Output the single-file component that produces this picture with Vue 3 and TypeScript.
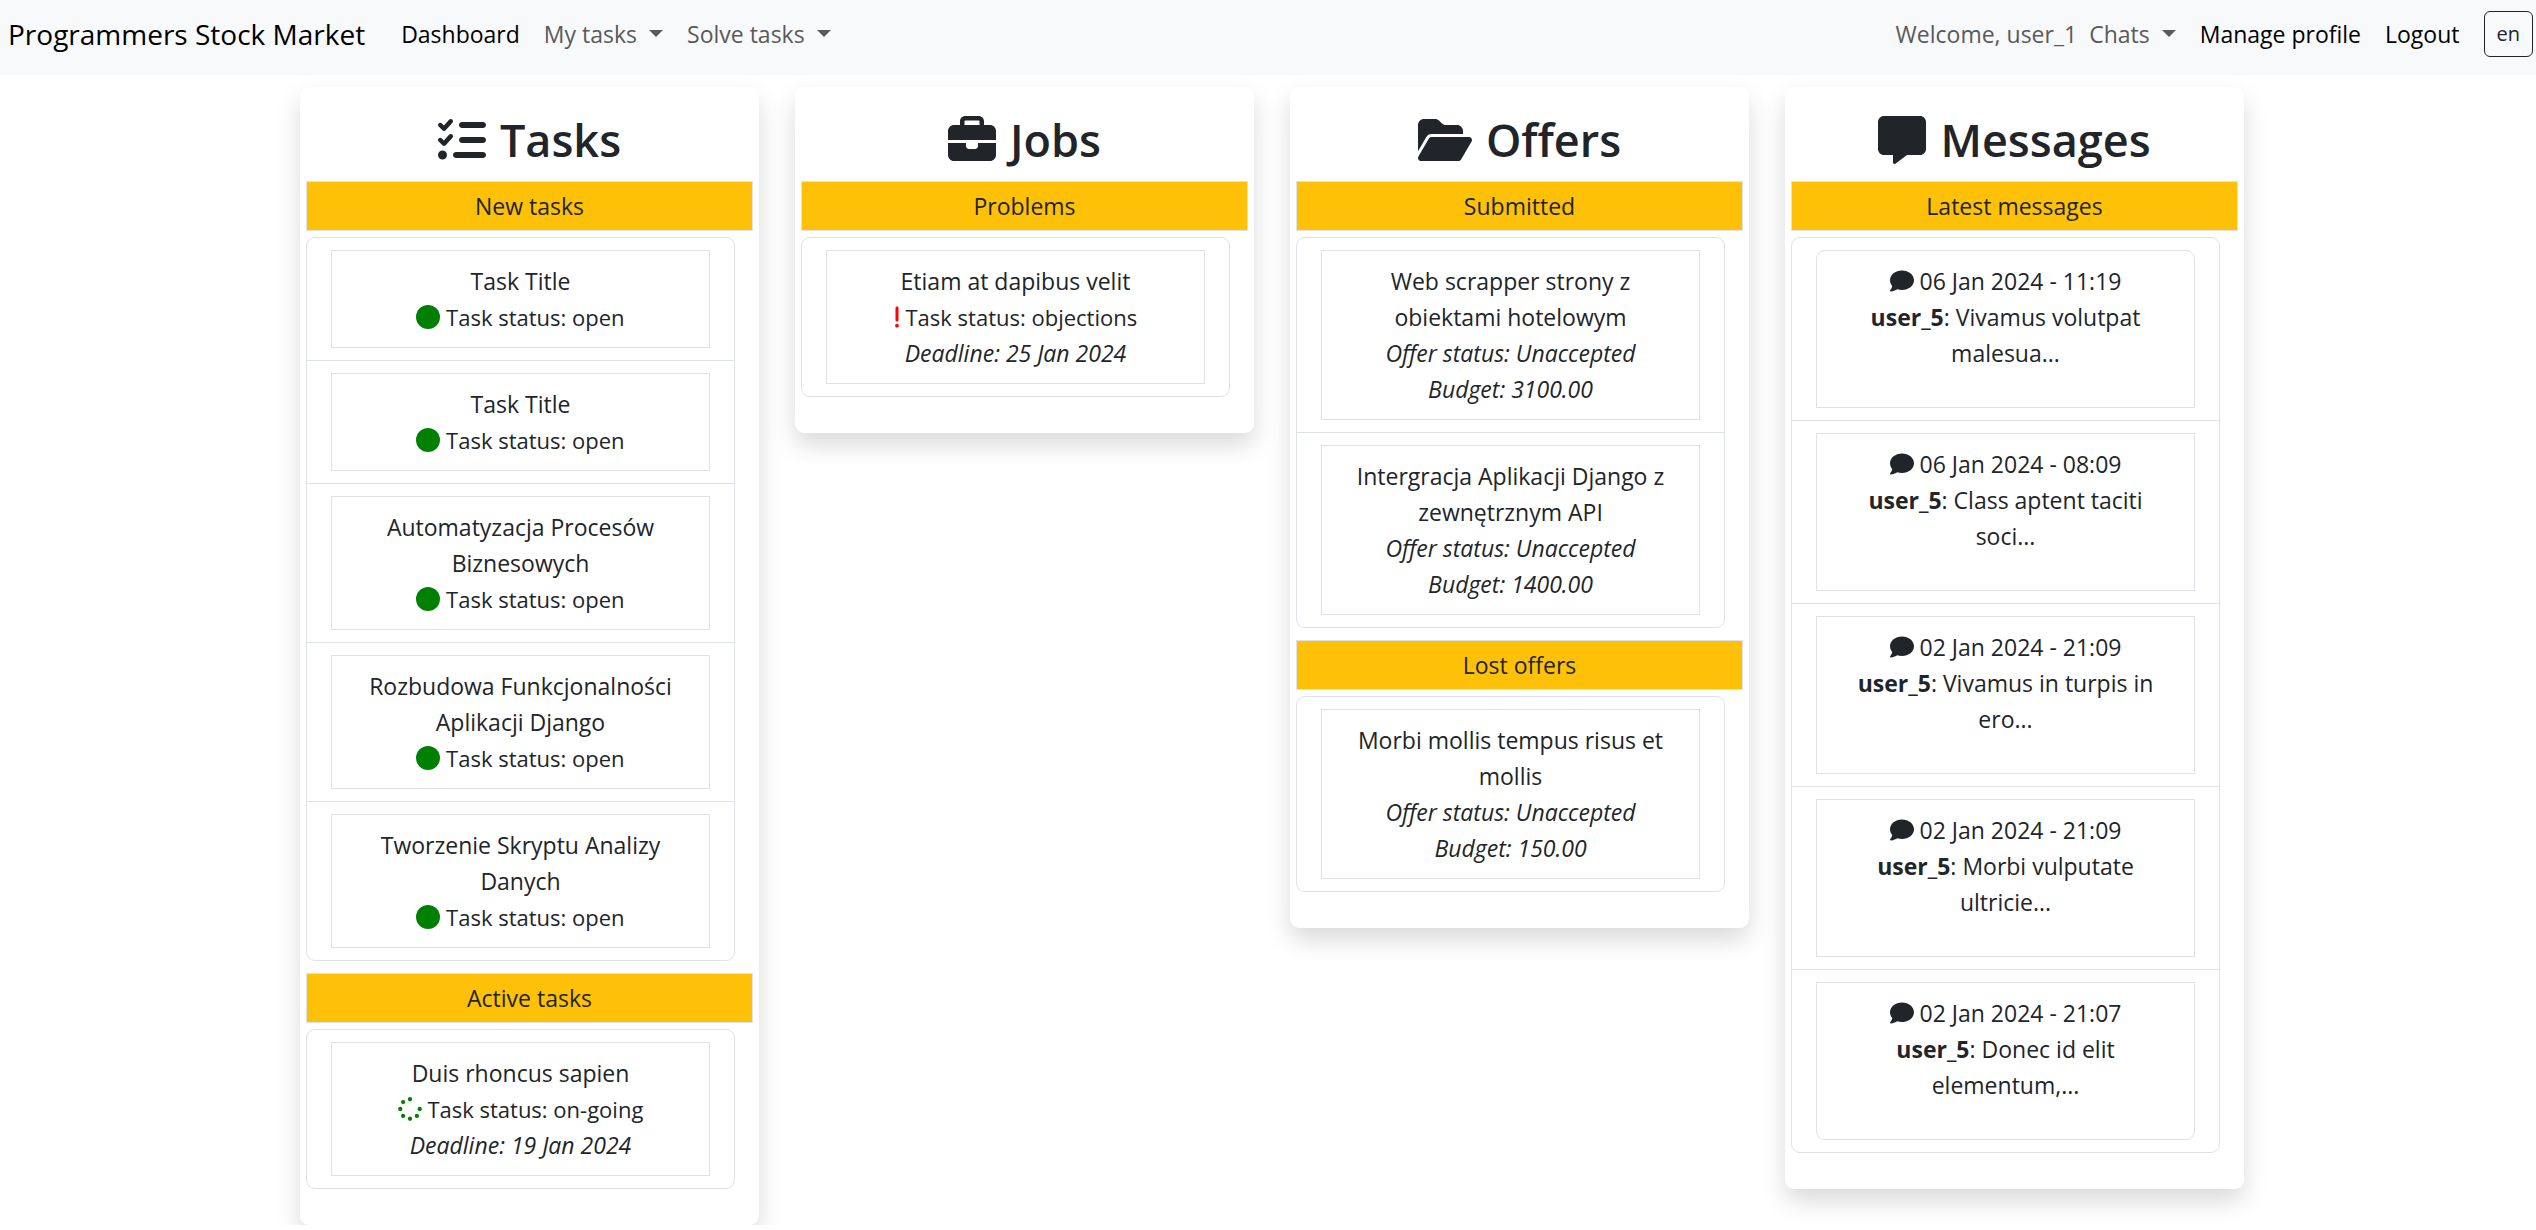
<script setup lang="ts">
interface Icon {
  width: number
  path: string
}

interface Entry {
  title?: string
  icon?: Icon
  iconClass?: string
  status?: string
  details?: string[]
  date?: string
  author?: string
  text?: string
}

interface Section {
  name: string
  entries: Entry[]
}

interface Board {
  title: string
  icon: Icon
  rounded?: boolean
  sections: Section[]
}

const listCheck: Icon = {
  width: 512,
  path: 'M152.1 38.2c9.9 8.9 10.7 24 1.8 33.9l-72 80c-4.4 4.9-10.6 7.8-17.2 7.9s-12.9-2.4-17.6-7L7 113C-2.3 103.6-2.3 88.4 7 79s24.6-9.4 33.9 0l22.1 22.1 55.1-61.2c8.9-9.9 24-10.7 33.9-1.8zm0 160c9.9 8.9 10.7 24 1.8 33.9l-72 80c-4.4 4.9-10.6 7.8-17.2 7.9s-12.9-2.4-17.6-7L7 273c-9.4-9.4-9.4-24.6 0-33.9s24.6-9.4 33.9 0l22.1 22.1 55.1-61.2c8.9-9.9 24-10.7 33.9-1.8zM224 96c0-17.7 14.3-32 32-32H480c17.7 0 32 14.3 32 32s-14.3 32-32 32H256c-17.7 0-32-14.3-32-32zm0 160c0-17.7 14.3-32 32-32H480c17.7 0 32 14.3 32 32s-14.3 32-32 32H256c-17.7 0-32-14.3-32-32zM160 416c0-17.7 14.3-32 32-32H480c17.7 0 32 14.3 32 32s-14.3 32-32 32H192c-17.7 0-32-14.3-32-32zM48 368a48 48 0 1 1 0 96 48 48 0 1 1 0-96z',
}
const briefcase: Icon = {
  width: 512,
  path: 'M184 48H328c4.4 0 8 3.6 8 8V96H176V56c0-4.4 3.6-8 8-8zm-56 8V96H64C28.7 96 0 124.7 0 160v96H192 320 512V160c0-35.3-28.7-64-64-64H384V56c0-30.9-25.1-56-56-56H184c-30.9 0-56 25.1-56 56zM512 288H320v32c0 17.7-14.3 32-32 32H224c-17.7 0-32-14.3-32-32V288H0V416c0 35.3 28.7 64 64 64H448c35.3 0 64-28.7 64-64V288z',
}
const folderOpen: Icon = {
  width: 576,
  path: 'M88.7 223.8L0 375.8V96C0 60.7 28.7 32 64 32H181.5c17 0 33.3 6.7 45.3 18.7l26.5 26.5c12 12 28.3 18.7 45.3 18.7H416c35.3 0 64 28.7 64 64v32H144c-22.8 0-43.8 12.1-55.3 31.8zm27.6 16.1C122.1 230 132.6 224 144 224H544c11.5 0 22 6.1 27.7 16.1s5.7 22.2-.1 32.1l-112 192C453.9 474 443.4 480 432 480H32c-11.5 0-22-6.1-27.7-16.1s-5.7-22.2 .1-32.1l112-192z',
}
const messageIcon: Icon = {
  width: 512,
  path: 'M64 0C28.7 0 0 28.7 0 64V352c0 35.3 28.7 64 64 64h96v80c0 6.1 3.4 11.6 8.8 14.3s11.9 2.1 16.8-1.5L309.3 416H448c35.3 0 64-28.7 64-64V64c0-35.3-28.7-64-64-64H64z',
}
const comment: Icon = {
  width: 512,
  path: 'M512 240c0 114.9-114.6 208-256 208c-37.1 0-72.3-6.4-104.1-17.9c-11.9 8.7-31.3 20.6-54.3 30.6C73.6 471.1 44.7 480 16 480c-6.5 0-12.3-3.9-14.8-9.9c-2.5-6-1.1-12.8 3.4-17.4l.3-.3c.3-.3 .7-.7 1.3-1.4c1.1-1.2 2.8-3.1 4.9-5.7c4.1-5 9.6-12.4 15.2-21.6c10-16.6 19.5-38.4 21.4-62.9C17.7 326.8 0 285.1 0 240C0 125.1 114.6 32 256 32s256 93.1 256 208z',
}
const circle: Icon = {
  width: 512,
  path: 'M256 512A256 256 0 1 0 256 0a256 256 0 1 0 0 512z',
}

/** One dot of the spinner, centred on the given point. */
const dot = (x: number, y: number): string => `M${x - 46} ${y}a46 46 0 1 0 92 0a46 46 0 1 0-92 0z`

const spinner: Icon = {
  width: 512,
  path: [
    dot(256, 48),
    dot(256, 464),
    dot(48, 256),
    dot(464, 256),
    dot(109, 109),
    dot(109, 403),
    dot(403, 403),
  ].join(''),
}
const exclamation: Icon = {
  width: 128,
  path: 'M96 64c0-17.7-14.3-32-32-32S32 46.3 32 64V320c0 17.7 14.3 32 32 32s32-14.3 32-32V64zM64 480a40 40 0 1 0 0-80 40 40 0 1 0 0 80z',
}

const openTask = (title: string): Entry => ({
  title,
  icon: circle,
  iconClass: 'green',
  status: 'Task status: open',
})

const offer = (title: string, budget: string): Entry => ({
  title,
  details: ['Offer status: Unaccepted', `Budget: ${budget}`],
})

const message = (date: string, text: string): Entry => ({ date, author: 'user_5', text })

const boards: Board[] = [
  {
    title: 'Tasks',
    icon: listCheck,
    sections: [
      {
        name: 'New tasks',
        entries: [
          openTask('Task Title'),
          openTask('Task Title'),
          openTask('Automatyzacja Procesów Biznesowych'),
          openTask('Rozbudowa Funkcjonalności Aplikacji Django'),
          openTask('Tworzenie Skryptu Analizy Danych'),
        ],
      },
      {
        name: 'Active tasks',
        entries: [
          {
            title: 'Duis rhoncus sapien',
            icon: spinner,
            iconClass: 'green',
            status: 'Task status: on-going',
            details: ['Deadline: 19 Jan 2024'],
          },
        ],
      },
    ],
  },
  {
    title: 'Jobs',
    icon: briefcase,
    sections: [
      {
        name: 'Problems',
        entries: [
          {
            title: 'Etiam at dapibus velit',
            icon: exclamation,
            iconClass: 'red',
            status: 'Task status: objections',
            details: ['Deadline: 25 Jan 2024'],
          },
        ],
      },
    ],
  },
  {
    title: 'Offers',
    icon: folderOpen,
    sections: [
      {
        name: 'Submitted',
        entries: [
          offer('Web scrapper strony z obiektami hotelowym', '3100.00'),
          offer('Intergracja Aplikacji Django z zewnętrznym API', '1400.00'),
        ],
      },
      { name: 'Lost offers', entries: [offer('Morbi mollis tempus risus et mollis', '150.00')] },
    ],
  },
  {
    title: 'Messages',
    icon: messageIcon,
    rounded: true,
    sections: [
      {
        name: 'Latest messages',
        entries: [
          message('06 Jan 2024 - 11:19', 'Vivamus volutpat malesua...'),
          message('06 Jan 2024 - 08:09', 'Class aptent taciti soci...'),
          message('02 Jan 2024 - 21:09', 'Vivamus in turpis in ero...'),
          message('02 Jan 2024 - 21:09', 'Morbi vulputate ultricie...'),
          message('02 Jan 2024 - 21:07', 'Donec id elit elementum,...'),
        ],
      },
    ],
  },
]
</script>

<template>
  <div class="page">
    <nav class="navbar">
      <a class="brand" href="#">Programmers Stock Market</a>
      <div class="links">
        <a class="link active" href="#">Dashboard</a>
        <button class="link toggle" type="button">My tasks</button>
        <button class="link toggle" type="button">Solve tasks</button>
      </div>
      <div class="account">
        <span class="welcome">Welcome, user_1</span>
        <button class="link toggle" type="button">Chats</button>
        <a class="link active" href="#">Manage profile</a>
        <a class="link active" href="#">Logout</a>
        <button class="language" type="button">en</button>
      </div>
    </nav>

    <main class="boards">
      <section v-for="board in boards" :key="board.title" class="board">
        <h1 class="board-title">
          <svg
            class="title-icon"
            :class="{ wide: board.icon.width > 512 }"
            :viewBox="`0 0 ${board.icon.width} 512`"
            aria-hidden="true"
          >
            <path :d="board.icon.path" />
          </svg>
          {{ board.title }}
        </h1>

        <template v-for="section in board.sections" :key="section.name">
          <h2 class="section-title">{{ section.name }}</h2>
          <ul class="list" :class="{ rounded: board.rounded }">
            <li v-for="(entry, index) in section.entries" :key="index" class="item">
              <a class="entry" :class="{ message: entry.date }" href="#">
                <template v-if="entry.date">
                  <span class="line">
                    <svg class="icon" viewBox="0 0 512 512" aria-hidden="true">
                      <path :d="comment.path" />
                    </svg>
                    {{ entry.date }}
                  </span>
                  <span class="line"><b>{{ entry.author }}</b>: {{ entry.text }}</span>
                </template>
                <template v-else>
                  <span class="line">{{ entry.title }}</span>
                  <span v-if="entry.status && entry.icon" class="line status">
                    <svg
                      class="icon"
                      :class="[entry.iconClass, { narrow: entry.icon.width < 512 }]"
                      :viewBox="`0 0 ${entry.icon.width} 512`"
                      aria-hidden="true"
                    >
                      <path :d="entry.icon.path" />
                    </svg>
                    {{ entry.status }}
                  </span>
                  <em v-for="detail in entry.details" :key="detail" class="line">{{ detail }}</em>
                </template>
              </a>
            </li>
          </ul>
        </template>
      </section>
    </main>
  </div>
</template>

<style>
body {
  margin: 0;
  background: #fff;
}
</style>

<style scoped>
.page,
.page * {
  box-sizing: border-box;
}

.page {
  color: #212529;
  font-family: 'Segoe UI', 'Open Sans', 'Noto Sans', sans-serif;
  font-size: 23px;
  line-height: 36px;
}

.navbar {
  display: flex;
  align-items: center;
  height: 75px;
  padding: 0 3px 8px 8px;
  background: #f8f9fa;
}

.brand {
  margin-right: 36px;
  color: #000;
  font-size: 28px;
  text-decoration: none;
  white-space: nowrap;
}

.links,
.account {
  display: flex;
  align-items: center;
  gap: 24px;
}

.account {
  margin-left: auto;
}

.link {
  padding: 0;
  border: 0;
  background: none;
  color: #595a5b;
  font: inherit;
  text-decoration: none;
  white-space: nowrap;
}

.active {
  color: #000;
}

.toggle {
  display: flex;
  align-items: center;
  gap: 12px;
}

.toggle::after {
  content: '';
  border: 7px solid transparent;
  border-top-color: currentColor;
  border-bottom: 0;
}

.welcome {
  margin-right: -12px;
  color: #595a5b;
  white-space: nowrap;
}

.language {
  height: 46px;
  padding: 0 12px;
  border: 1px solid #212529;
  border-radius: 6px;
  background: none;
  color: #212529;
  font: inherit;
  font-size: 20px;
}

.boards {
  display: grid;
  grid-template-columns: repeat(4, minmax(0, 1fr));
  align-items: start;
  gap: 36px;
  max-width: 1952px;
  margin: 12px auto 0;
  padding-left: 8px;
}

.board {
  padding: 24px 6px 36px;
  border-radius: 9px;
  background: #fff;
  box-shadow: 0 12px 24px rgba(0, 0, 0, 0.15);
}

.board-title {
  display: flex;
  justify-content: center;
  align-items: center;
  gap: 14px;
  margin: 0 0 12px;
  font-size: 45px;
  font-weight: 600;
  line-height: 58px;
}

.title-icon {
  width: 48px;
  height: 48px;
  fill: currentColor;
}

.title-icon.wide {
  width: 54px;
}

.section-title {
  margin: 0 0 6px;
  padding: 6px;
  border: 1px solid #dee2e6;
  background: #ffc107;
  font-size: inherit;
  font-weight: 400;
  text-align: center;
}

.list {
  margin: 0 18px 0 0;
  padding: 0;
  border: 1px solid #dee2e6;
  border-radius: 9px;
  list-style: none;
}

.list + .section-title {
  margin-top: 12px;
}

.item {
  padding: 12px 24px;
}

.item + .item {
  border-top: 1px solid #dee2e6;
}

.entry {
  display: block;
  padding: 12px 24px;
  border: 1px solid #dee2e6;
  color: inherit;
  text-align: center;
  text-decoration: none;
}

.entry.message {
  padding-bottom: 36px;
}

.rounded .item:first-child .entry {
  border-radius: 9px 9px 0 0;
}

.rounded .item:last-child .entry {
  border-radius: 0 0 9px 9px;
}

.line {
  display: block;
}

.status {
  font-size: 22px;
}

.icon {
  width: 24px;
  height: 24px;
  fill: currentColor;
  vertical-align: -3px;
}

.icon.narrow {
  width: 6px;
}

.green {
  color: #008000;
}

.red {
  color: #f00;
}
</style>
